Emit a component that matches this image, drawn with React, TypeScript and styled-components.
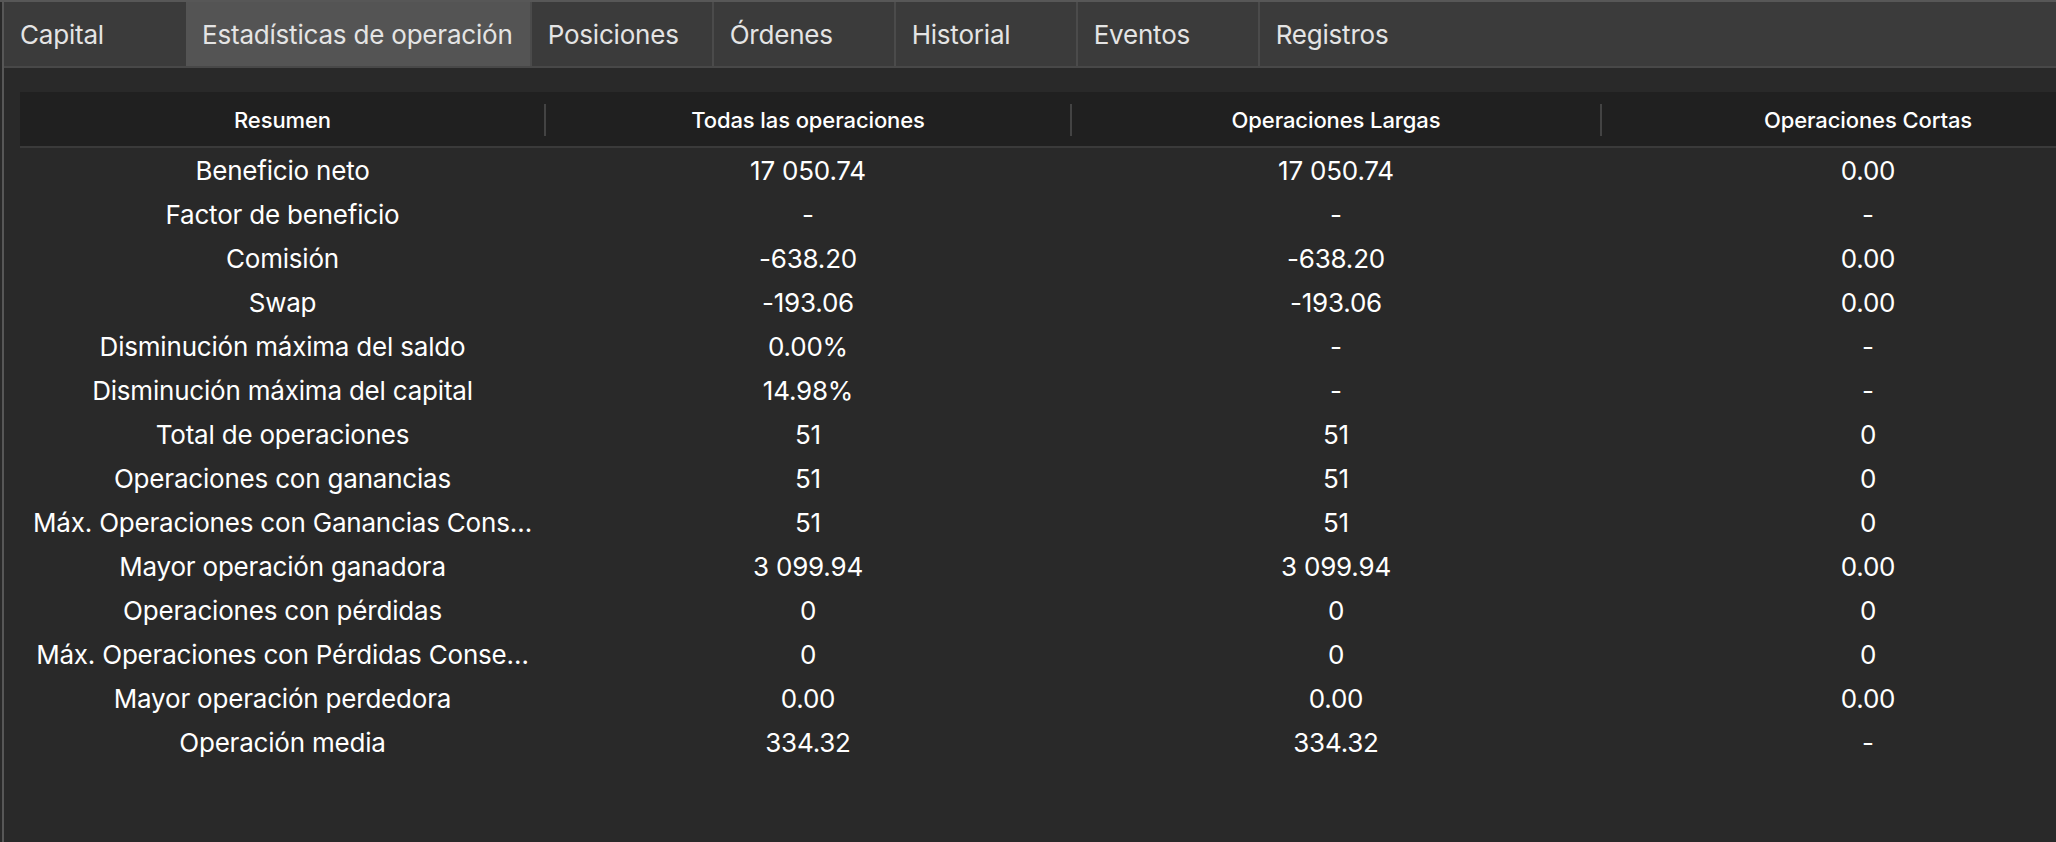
import React from "react";
import styled, { createGlobalStyle } from "styled-components";

const GlobalStyle = createGlobalStyle`
  html, body {
    margin: 0;
    padding: 0;
    background: #292929;
    overflow: hidden;
  }
  * { box-sizing: border-box; }
`;

const Frame = styled.div`
  width: 2056px;
  height: 842px;
  background: #292929;
  border-top: 2px solid #575757;
  padding-left: 2px;
  overflow: hidden;
  font-family: Inter, "Noto Sans", "Liberation Sans", sans-serif;
`;

const Panel = styled.div`
  height: 100%;
  border-left: 2px solid #575757;
  display: flex;
  flex-direction: column;
`;

const TabBar = styled.div`
  display: flex;
  height: 66px;
  background: #3b3b3b;
  border-bottom: 2px solid #484848;
  flex-shrink: 0;
`;

const Tab = styled.div<{ $active?: boolean; $first?: boolean }>`
  min-width: 182px;
  height: 64px;
  display: flex;
  align-items: center;
  padding: 1px 17px 0 ${(p) => (p.$first ? "16px" : "16px")};
  font-size: 26px;
  letter-spacing: -0.2px;
  color: #e4e4e4;
  white-space: nowrap;
  background: ${(p) => (p.$active ? "#545454" : "transparent")};
  border-left: ${(p) => (p.$first || p.$active ? "none" : "2px solid #4b4b4b")};
`;

const Content = styled.div`
  flex: 1;
  padding: 24px 0 0 16px;
  overflow: hidden;
`;

const Table = styled.div`
  width: 2115px;
  display: grid;
  grid-template-columns: 525px 526px 530px 534px;
`;

const HeaderCell = styled.div<{ $sep?: boolean }>`
  height: 56px;
  padding-top: 2px;
  background: #202020;
  border-bottom: 2px solid #3a3a3a;
  display: flex;
  align-items: center;
  justify-content: center;
  position: relative;
  font-size: 22px;
  font-weight: 500;
  letter-spacing: -0.1px;
  color: #ffffff;
  white-space: nowrap;
  &::before {
    content: "";
    display: ${(p) => (p.$sep ? "block" : "none")};
    position: absolute;
    left: -1px;
    top: 12px;
    width: 2px;
    height: 32px;
    background: #434343;
  }
`;

const Cell = styled.div`
  height: 44px;
  padding: 0 12px;
  display: flex;
  align-items: center;
  justify-content: center;
  font-size: 26px;
  letter-spacing: -0.2px;
  color: #ffffff;
  min-width: 0;
`;

const CellText = styled.span`
  white-space: nowrap;
  overflow: hidden;
  text-overflow: ellipsis;
  max-width: 100%;
`;

const tabs = [
  "Capital",
  "Estadísticas de operación",
  "Posiciones",
  "Órdenes",
  "Historial",
  "Eventos",
  "Registros",
];

const headers = [
  "Resumen",
  "Todas las operaciones",
  "Operaciones Largas",
  "Operaciones Cortas",
];

const rows: string[][] = [
  ["Beneficio neto", "17 050.74", "17 050.74", "0.00"],
  ["Factor de beneficio", "-", "-", "-"],
  ["Comisión", "-638.20", "-638.20", "0.00"],
  ["Swap", "-193.06", "-193.06", "0.00"],
  ["Disminución máxima del saldo", "0.00%", "-", "-"],
  ["Disminución máxima del capital", "14.98%", "-", "-"],
  ["Total de operaciones", "51", "51", "0"],
  ["Operaciones con ganancias", "51", "51", "0"],
  ["Máx. Operaciones con Ganancias Cons…", "51", "51", "0"],
  ["Mayor operación ganadora", "3 099.94", "3 099.94", "0.00"],
  ["Operaciones con pérdidas", "0", "0", "0"],
  ["Máx. Operaciones con Pérdidas Conse…", "0", "0", "0"],
  ["Mayor operación perdedora", "0.00", "0.00", "0.00"],
  ["Operación media", "334.32", "334.32", "-"],
];

export default function App() {
  return (
    <>
      <GlobalStyle />
      <Frame>
        <Panel>
          <TabBar>
            {tabs.map((t, i) => (
              <Tab key={t} $first={i === 0} $active={i === 1}>
                {t}
              </Tab>
            ))}
          </TabBar>
          <Content>
            <Table>
              {headers.map((h, i) => (
                <HeaderCell key={h} $sep={i > 0}>
                  {h}
                </HeaderCell>
              ))}
              {rows.map((r, ri) =>
                r.map((c, ci) => (
                  <Cell key={`${ri}-${ci}`}>
                    <CellText>{c}</CellText>
                  </Cell>
                ))
              )}
            </Table>
          </Content>
        </Panel>
      </Frame>
    </>
  );
}
